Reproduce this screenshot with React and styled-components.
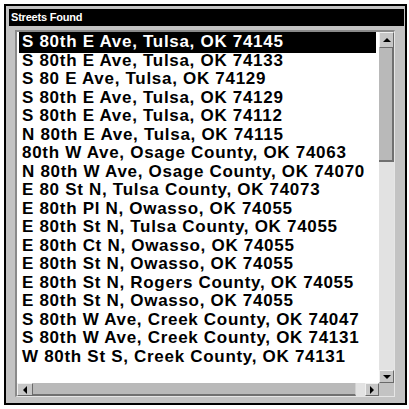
import React from 'react';
import styled, { createGlobalStyle } from 'styled-components';

const GlobalStyle = createGlobalStyle`
  html, body {
    margin: 0;
    padding: 0;
    background: #ffffff;
  }
`;

const streets = [
  'S 80th E Ave, Tulsa, OK 74145',
  'S 80th E Ave, Tulsa, OK 74133',
  'S 80 E Ave, Tulsa, OK 74129',
  'S 80th E Ave, Tulsa, OK 74129',
  'S 80th E Ave, Tulsa, OK 74112',
  'N 80th E Ave, Tulsa, OK 74115',
  '80th W Ave, Osage County, OK 74063',
  'N 80th W Ave, Osage County, OK 74070',
  'E 80 St N, Tulsa County, OK 74073',
  'E 80th Pl N, Owasso, OK 74055',
  'E 80th St N, Tulsa County, OK 74055',
  'E 80th Ct N, Owasso, OK 74055',
  'E 80th St N, Owasso, OK 74055',
  'E 80th St N, Rogers County, OK 74055',
  'E 80th St N, Owasso, OK 74055',
  'S 80th W Ave, Creek County, OK 74047',
  'S 80th W Ave, Creek County, OK 74131',
  'W 80th St S, Creek County, OK 74131',
];

const Screen = styled.div`
  width: 409px;
  height: 409px;
  padding: 4px 2px 4px 4px;
  box-sizing: border-box;
`;

const Window = styled.div`
  height: 401px;
  border: 2px solid #000;
  background: #c3c3c3;
  box-sizing: border-box;
  padding: 3px 1px 6px 3px;
  display: flex;
  flex-direction: column;
`;

const TitleBar = styled.div`
  height: 17px;
  background: #000;
  color: #fff;
  font-family: 'Liberation Sans', Arial, sans-serif;
  font-weight: bold;
  font-size: 11px;
  line-height: 17px;
  padding-left: 2px;
  letter-spacing: -0.2px;
`;

const Body = styled.div`
  flex: 1;
  padding: 4px 9px 0 6px;
  display: flex;
`;

const ListBox = styled.div`
  flex: 1;
  border-top: 2px solid #8a8a8a;
  border-left: 2px solid #8a8a8a;
  border-right: 1px solid #e6e6e6;
  border-bottom: 1px solid #e6e6e6;
  display: grid;
  grid-template-columns: 1fr 15px;
  grid-template-rows: 1fr 13px;
  background: #c3c3c3;
`;

const Items = styled.div`
  background: #fff;
  overflow: hidden;
  padding: 1px 3px 0 2px;
`;

const Row = styled.div`
  height: 18.5px;
  line-height: 18.5px;
  padding-left: 3px;
  white-space: nowrap;
  font-family: 'Liberation Sans', Arial, sans-serif;
  font-weight: bold;
  font-size: 17px;
  letter-spacing: 0.7px;
  background: ${(p) => (p.$selected ? '#000' : 'transparent')};
  color: ${(p) => (p.$selected ? '#fff' : '#000')};
  box-shadow: ${(p) => (p.$selected ? '0 -1px 0 #000, 0 1px 0 #000' : 'none')};
`;

const VBar = styled.div`
  display: flex;
  flex-direction: column;
  background: #dcdcdc;
`;

const HBar = styled.div`
  display: flex;
  background: #dcdcdc;
`;

const Arrow = styled.div`
  flex: 0 0 ${(p) => p.$size}px;
  background: #c6c6c6;
  border-top: 1px solid #f0f0f0;
  border-left: 1px solid #f0f0f0;
  border-right: 1px solid #6a6a6a;
  border-bottom: 1px solid #6a6a6a;
  box-sizing: border-box;
  display: flex;
  align-items: center;
  justify-content: center;
`;

const Thumb = styled.div`
  flex: 0 0 ${(p) => p.$size}px;
  background: #b9b9b9;
  border-right: ${(p) => (p.$vertical ? '2px solid #707070' : '1px solid #d0d0d0')};
  border-bottom: 2px solid #707070;
  box-sizing: border-box;
`;

const Track = styled.div`
  flex: 1;
  background: #e2e2e2;
`;

const Corner = styled.div`
  background: #c3c3c3;
`;

const Tri = ({ dir }) => {
  const pts = {
    up: '0,4 4,0 8,4',
    down: '0,0 8,0 4,4',
    left: '4,0 4,8 0,4',
    right: '0,0 0,8 4,4',
  }[dir];
  const horiz = dir === 'left' || dir === 'right';
  return (
    <svg width={horiz ? 4 : 8} height={horiz ? 8 : 4} viewBox={horiz ? '0 0 4 8' : '0 0 8 4'}>
      <polygon points={pts} fill="#000" />
    </svg>
  );
};

const App = () => (
  <Screen>
    <GlobalStyle />
    <Window>
      <TitleBar>Streets Found</TitleBar>
      <Body>
        <ListBox>
          <Items>
            {streets.map((s, i) => (
              <Row key={i} $selected={i === 0}>{s}</Row>
            ))}
          </Items>
          <VBar>
            <Arrow $size={16}><Tri dir="up" /></Arrow>
            <Thumb $vertical $size={114} />
            <Track />
            <Arrow $size={13}><Tri dir="down" /></Arrow>
          </VBar>
          <HBar>
            <Arrow $size={16}><Tri dir="left" /></Arrow>
            <Thumb $size={323} />
            <Track />
            <Arrow $size={14}><Tri dir="right" /></Arrow>
          </HBar>
          <Corner />
        </ListBox>
      </Body>
    </Window>
  </Screen>
);

export default App;
